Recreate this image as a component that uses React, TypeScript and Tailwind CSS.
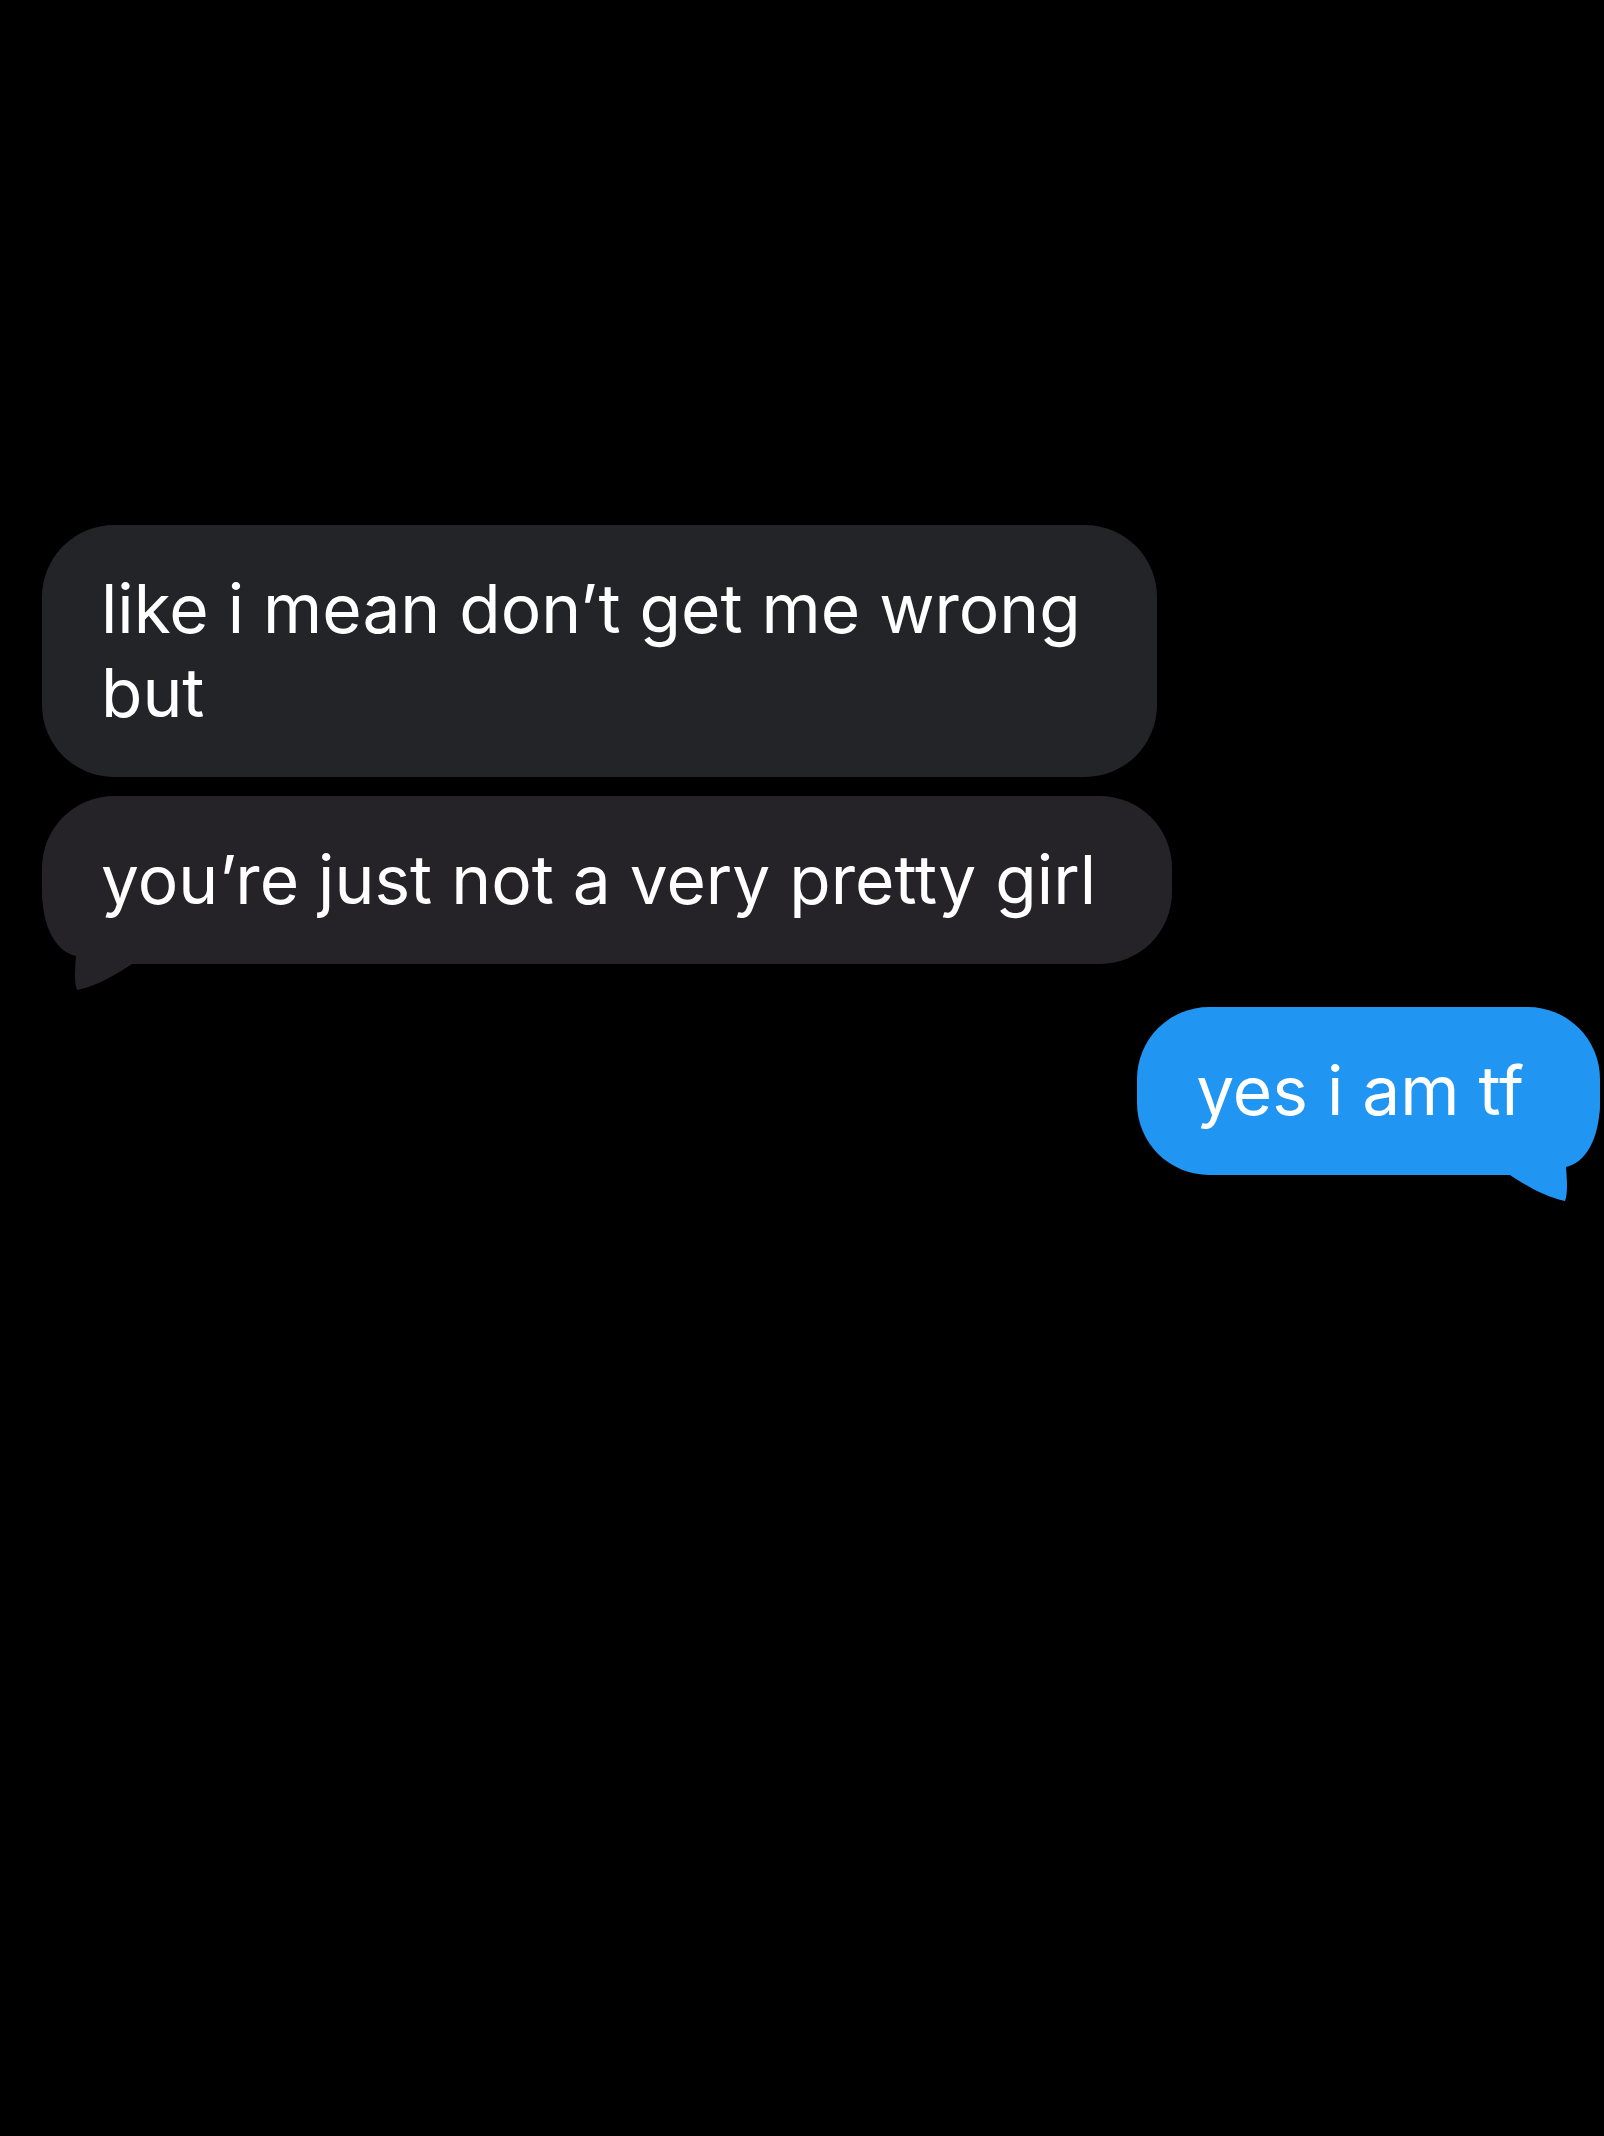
import type { ReactNode } from "react"

type Side = "left" | "right"

// iMessage-style tail hanging off the bottom corner of a bubble
function Tail({ side, color }: { side: Side; color: string }) {
  const d = "M0 -75 C0 -35 15 -12 34 -8 C33 5 32 18 35 26 C55 22 75 10 90 0 L90 -75 Z"
  return (
    <svg
      width="92"
      height="104"
      viewBox="0 -76 92 104"
      className={side === "left" ? "absolute left-0 -bottom-[28px]" : "absolute right-0 -bottom-[28px] -scale-x-100"}
    >
      <path d={d} fill={color} />
    </svg>
  )
}

function Bubble({
  children,
  side = "left",
  color,
  tail = false,
}: {
  children: ReactNode
  side?: Side
  color: string
  tail?: boolean
}) {
  return (
    <div className={side === "left" ? "flex justify-start" : "flex justify-end"}>
      <div className="relative">
        {tail && <Tail side={side} color={color} />}
        <div
          className="relative whitespace-nowrap rounded-[72px] pl-[59px] pr-[76px] py-[42px] text-[67.6px] leading-[84px] text-white"
          style={{ backgroundColor: color }}
        >
          {children}
        </div>
      </div>
    </div>
  )
}

export default function App() {
  return (
    <div
      className="min-h-[2136px] w-full bg-black pl-[42px] pr-[4px] pt-[525px]"
      style={{ fontFamily: "Inter, 'Noto Sans', sans-serif" }}
    >
      <div className="flex flex-col">
        <Bubble color="#232428">
          like i mean don’t get me wrong
          <br />
          but
        </Bubble>
        <div className="h-[19px]" />
        <Bubble color="#252328" tail>
          you’re just not a very pretty girl
        </Bubble>
        <div className="h-[43px]" />
        <Bubble side="right" color="#2195f2" tail>
          yes i am tf
        </Bubble>
      </div>
    </div>
  )
}
